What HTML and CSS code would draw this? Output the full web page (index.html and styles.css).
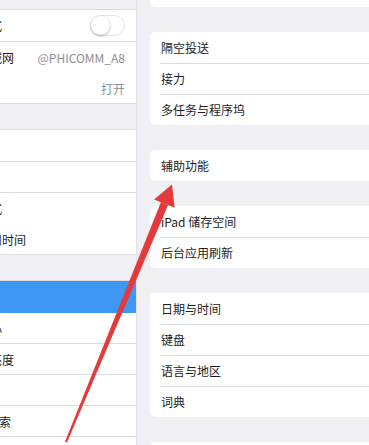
FILE: index.html
```html
<!DOCTYPE html>
<html lang="zh">
<head>
<meta charset="utf-8">
<title>设置 - 通用</title>
<link rel="stylesheet" href="styles.css">
</head>
<body>
<div class="page">
  <aside class="sidebar">
    <div class="group">
      <div class="row"><span class="label">飞行模式</span><span class="toggle"><span class="knob"></span></span></div>
      <div class="row"><span class="label">无线局域网</span><span class="value">@PHICOMM_A8</span></div>
      <div class="row no-sep"><span class="label">蓝牙</span><span class="value">打开</span></div>
    </div>
    <div class="group">
      <div class="row"><span class="label">通知</span></div>
      <div class="row"><span class="label">声音</span></div>
      <div class="row"><span class="label">勿扰模式</span></div>
      <div class="row no-sep"><span class="label">屏幕使用时间</span></div>
    </div>
    <div class="group">
      <div class="row selected"><span class="label">通用</span></div>
      <div class="row"><span class="label">控制中心</span></div>
      <div class="row"><span class="label">显示与亮度</span></div>
      <div class="row"><span class="label">墙纸</span></div>
      <div class="row"><span class="label">Siri 与搜索</span></div>
      <div class="row"><span class="label">触控 ID 与密码</span></div>
    </div>
  </aside>
  <main class="detail">
    <div class="card card-tail"></div>
    <div class="card">
      <div class="item">隔空投送</div>
      <div class="item">接力</div>
      <div class="item">多任务与程序坞</div>
    </div>
    <div class="card">
      <div class="item">辅助功能</div>
    </div>
    <div class="card">
      <div class="item">iPad 储存空间</div>
      <div class="item">后台应用刷新</div>
    </div>
    <div class="card">
      <div class="item">日期与时间</div>
      <div class="item">键盘</div>
      <div class="item">语言与地区</div>
      <div class="item">词典</div>
    </div>
    <div class="card">
      <div class="item">VPN</div>
    </div>
  </main>
  <svg class="arrow" width="369" height="445" viewBox="0 0 369 445" aria-hidden="true">
    <polygon points="65,441.8 67,442.4 168,205.2 161,202" fill="#e53a3c"/>
    <polygon points="172,184.5 154,199.4 174.6,207.8" fill="#e53a3c"/>
  </svg>
</div>
</body>
</html>
```
FILE: styles.css
```css
html, body {
  margin: 0;
  padding: 0;
}

body {
  background: #efeff4;
  font-family: "Noto Sans CJK SC", "Noto Sans", sans-serif;
  font-size: 12px;
  color: #1c1c1e;
}

.page {
  position: relative;
  display: flex;
  width: 369px;
  height: 445px;
  overflow: hidden;
}

.sidebar {
  flex: none;
  width: 136px;
  border-right: 1px solid #e2e2e6;
  display: flex;
  flex-direction: column;
  gap: 25px;
  padding-top: 10px;
  box-sizing: content-box;
}

.group {
  background: #fff;
  border-top: 1px solid #dcdce0;
  border-bottom: 1px solid #dcdce0;
}

.sidebar .group:first-child {
  margin-top: -1px;
}

.row {
  display: flex;
  align-items: center;
  height: 31px;
  box-sizing: border-box;
  overflow: hidden;
  padding-right: 11px;
}

.row + .row {
  border-top: 1px solid #dcdce0;
}

.row.no-sep {
  border-top-color: #fff;
}

.row.selected {
  background: #3f97f4;
  color: #fff;
}

.row.selected + .row {
  border-top-color: #3f97f4;
}

.label {
  flex: none;
  margin-left: -46px;
  white-space: nowrap;
}

.value {
  margin-left: auto;
  color: #8e8e93;
  white-space: nowrap;
}

.toggle {
  margin-left: auto;
  width: 35px;
  height: 21px;
  border-radius: 11px;
  box-sizing: border-box;
  border: 1px solid #e3e3e6;
  background: #fff;
  position: relative;
}

.knob {
  position: absolute;
  left: 0;
  top: 0;
  width: 19px;
  height: 19px;
  border-radius: 50%;
  background: #fff;
  box-shadow: 0 1px 3px rgba(0, 0, 0, 0.3);
}

.detail {
  flex: 1;
  margin-left: 13px;
  margin-right: -20px;
  display: flex;
  flex-direction: column;
  gap: 25px;
}

.card {
  background: #fff;
  border-radius: 5px;
  overflow: hidden;
  flex: none;
}

.card-tail {
  height: 7px;
  border-radius: 0 0 5px 5px;
}

.item {
  height: 31px;
  display: flex;
  align-items: center;
  padding-left: 11px;
  white-space: nowrap;
}

.item + .item {
  background: linear-gradient(#dcdce0, #dcdce0) no-repeat 10px 0 / 100% 1px;
}

.arrow {
  position: absolute;
  left: 0;
  top: 0;
  pointer-events: none;
}
```
